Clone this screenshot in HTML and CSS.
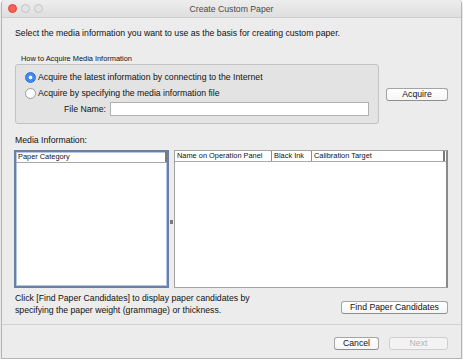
FILE: index.html
```html
<!DOCTYPE html>
<html lang="en">
<head>
    <meta charset="UTF-8">
    <meta name="viewport" content="width=device-width, initial-scale=1.0">
    <title>Create Custom Paper</title>
    <link rel="stylesheet" href="styles.css">
</head>
<body>
    <div class="window">
        <div class="titlebar">
            <div class="lights">
                <span class="light close"></span>
                <span class="light"></span>
                <span class="light"></span>
            </div>
            <div class="title">Create Custom Paper</div>
        </div>

        <div class="content">
            <p class="intro">Select the media information you want to use as the basis for creating custom paper.</p>

            <div class="group-label">How to Acquire Media Information</div>
            <div class="acquire-row">
                <div class="group">
                    <div class="radio-row">
                        <span class="radio checked"></span>
                        <span>Acquire the latest information by connecting to the Internet</span>
                    </div>
                    <div class="radio-row">
                        <span class="radio"></span>
                        <span>Acquire by specifying the media information file</span>
                    </div>
                    <div class="file-row">
                        <span class="file-label">File Name:</span>
                        <span class="text-input"></span>
                    </div>
                </div>
                <button class="btn acquire">Acquire</button>
            </div>

            <div class="section-label">Media Information:</div>
            <div class="lists">
                <div class="list focused">
                    <div class="list-header">
                        <span class="col col-category">Paper Category</span>
                    </div>
                </div>
                <div class="splitter"><span class="knob"></span></div>
                <div class="list">
                    <div class="list-header">
                        <span class="col col-name">Name on Operation Panel</span>
                        <span class="col col-ink">Black Ink</span>
                        <span class="col col-target">Calibration Target</span>
                        <span class="col col-end"></span>
                    </div>
                </div>
            </div>

            <div class="hint-row">
                <p class="hint">Click [Find Paper Candidates] to display paper candidates by specifying the paper weight (grammage) or thickness.</p>
                <button class="btn find">Find Paper Candidates</button>
            </div>
        </div>

        <div class="footer">
            <button class="btn cancel">Cancel</button>
            <button class="btn next" disabled>Next</button>
        </div>
    </div>
</body>
</html>
```

FILE: styles.css
```css
body {
    margin: 0;
    background-color: #ffffff;
    font-family: "Liberation Sans", Arial, sans-serif;
    font-size: 8.7px;
    color: #111111;
}
.window {
    width: 461px;
    height: 359px;
    margin-left: 1px;
    box-sizing: border-box;
    border: 1px solid #b4b4b4;
    border-top: none;
    border-radius: 4px 4px 0 0;
    background-color: #ececec;
    box-shadow: 0 1px 3px rgba(0, 0, 0, 0.25);
    display: flex;
    flex-direction: column;
    overflow: hidden;
}
.titlebar {
    height: 17px;
    border-bottom: 1px solid #cfcfcf;
    background: linear-gradient(#ededed, #dedede);
    position: relative;
    display: flex;
    align-items: center;
    justify-content: center;
}
.lights {
    position: absolute;
    left: 6px;
    top: 4px;
    display: flex;
    gap: 4px;
}
.light {
    width: 7px;
    height: 7px;
    border-radius: 50%;
    border: 1px solid #c4c4c4;
    background-color: #e3e3e3;
}
.light.close {
    border-color: #e0443a;
    background-color: #fc5f57;
}
.title {
    font-size: 8.7px;
    color: #4a4a4a;
}
.content {
    flex: 1;
    padding: 0 13px;
}
.intro {
    margin: 9px 0 0;
    line-height: 12px;
}
.group-label {
    margin: 15px 0 0 6px;
    font-size: 7.4px;
    line-height: 10px;
}
.acquire-row {
    display: flex;
    align-items: center;
}
.group {
    width: 364px;
    height: 60px;
    box-sizing: border-box;
    border: 1px solid #c2c2c2;
    border-radius: 3px;
    background-color: #e3e3e3;
    padding-top: 5px;
}
.radio-row {
    display: flex;
    align-items: center;
    height: 14px;
    margin-bottom: 2px;
    padding-left: 9px;
    gap: 2px;
}
.radio {
    width: 11px;
    height: 11px;
    box-sizing: border-box;
    border-radius: 50%;
    border: 1px solid #9b9b9b;
    background-color: #ffffff;
}
.radio.checked {
    border-color: #2a6fd6;
    background: radial-gradient(circle, #ffffff 0 1.6px, #3c8cf2 2.2px);
}
.file-row {
    display: flex;
    align-items: center;
    margin-top: 2px;
}
.file-label {
    width: 90px;
    margin-right: 4px;
    text-align: right;
}
.text-input {
    width: 259px;
    height: 14px;
    box-sizing: border-box;
    border: 1px solid #b0b0b0;
    background-color: #ffffff;
}
.btn {
    height: 13px;
    box-sizing: border-box;
    padding: 0;
    border: 1px solid #a4a4a4;
    border-bottom-color: #8e8e8e;
    border-radius: 3px;
    background: linear-gradient(#ffffff, #f6f6f6);
    font-family: "Liberation Sans", Arial, sans-serif;
    font-size: 8.7px;
    line-height: 11px;
    color: #111111;
}
.acquire {
    width: 62px;
    margin-left: 7px;
}
.section-label {
    margin-top: 10px;
    line-height: 12px;
}
.lists {
    display: flex;
    height: 138px;
    margin: 4px 0 0 -1px;
}
.list {
    flex: 1;
    box-sizing: border-box;
    border: 1px solid #a3a3a3;
    border-right: 2px solid #8a8a8a;
    background-color: #ffffff;
}
.list.focused {
    flex: 0 0 155px;
    border: 2px solid #6a7ea6;
    box-shadow: inset 0 0 0 1px #b4c7e8;
}
.list-header {
    display: flex;
    height: 10px;
    border-bottom: 1px solid #a8a8a8;
    font-size: 7.4px;
    line-height: 10px;
}
.col {
    padding-left: 2px;
    border-right: 1px solid #8c8c8c;
    white-space: nowrap;
}
.col-category {
    flex: 1;
    border-right: 2px solid #7a7a7a;
    padding-left: 2px;
}
.col-name {
    width: 94px;
}
.col-ink {
    width: 37px;
}
.col-target {
    flex: 1;
    border-right: 2px solid #7a7a7a;
}
.col-end {
    width: 1px;
    padding: 0;
    border: none;
}
.splitter {
    flex: 0 0 5px;
    display: flex;
    align-items: center;
    justify-content: center;
}
.knob {
    width: 3px;
    height: 4px;
    margin-top: 6px;
    background-color: #7b7b7b;
}
.hint-row {
    display: flex;
    justify-content: space-between;
    align-items: flex-end;
    margin-top: 4px;
}
.hint {
    margin: 0;
    width: 250px;
    line-height: 12px;
}
.find {
    width: 107px;
    margin-bottom: 2px;
}
.footer {
    height: 34px;
    box-sizing: border-box;
    border-top: 1px solid #d2d2d2;
    padding: 12px 13px 0 0;
    display: flex;
    justify-content: flex-end;
    gap: 10px;
}
.cancel {
    width: 45px;
}
.next {
    width: 59px;
    border-color: #cfcfcf;
    background: #f3f3f3;
    color: #b3b3b3;
}
```
